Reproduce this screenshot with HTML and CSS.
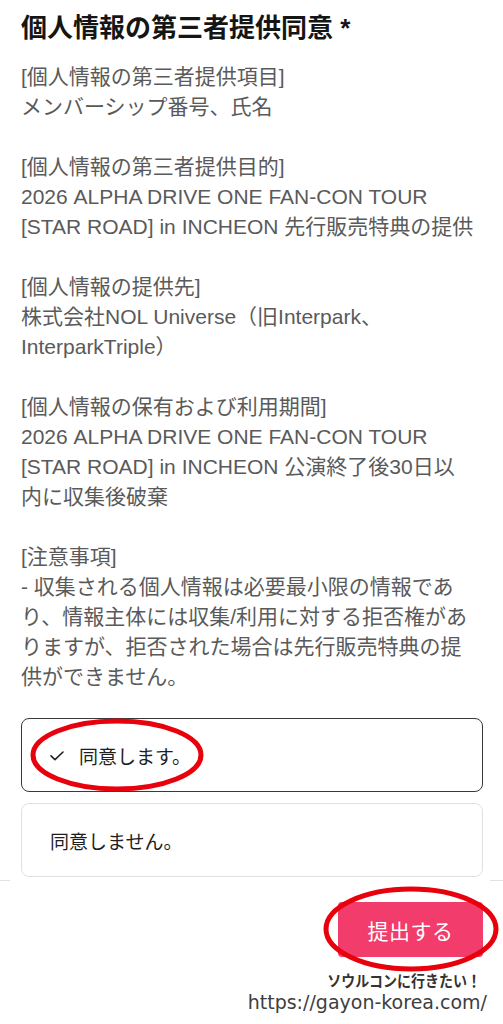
FILE: index.html
```html
<!DOCTYPE html>
<html lang="ja">
<head>
<meta charset="utf-8">
<link rel="stylesheet" href="styles.css">
</head>
<body>
<div class="page">
  <h1 class="title">個人情報の第三者提供同意 *</h1>
  <div class="terms">
    <p>[個人情報の第三者提供項目]<br>メンバーシップ番号、氏名</p>
    <p>[個人情報の第三者提供目的]<br>2026 ALPHA DRIVE ONE FAN-CON TOUR<br>[STAR ROAD] in INCHEON 先行販売特典の提供</p>
    <p>[個人情報の提供先]<br>株式会社NOL Universe（旧Interpark、<br>InterparkTriple）</p>
    <p>[個人情報の保有および利用期間]<br>2026 ALPHA DRIVE ONE FAN-CON TOUR<br>[STAR ROAD] in INCHEON 公演終了後30日以<br>内に収集後破棄</p>
    <p>[注意事項]<br>- 収集される個人情報は必要最小限の情報であ<br>り、情報主体には収集/利用に対する拒否権があ<br>りますが、拒否された場合は先行販売特典の提<br>供ができません。</p>
  </div>
  <div class="options">
    <div class="option selected">
      <svg class="check" width="14" height="10" viewBox="0 0 14 10"><path d="M1 4.8 L5 8.6 L13 1" fill="none" stroke="#222" stroke-width="1.6" stroke-linecap="round" stroke-linejoin="round"/></svg>
      <span>同意します。</span>
    </div>
    <div class="option">
      <span>同意しません。</span>
    </div>
  </div>
  <div class="rule"><span class="seg seg-left"></span><span class="seg seg-right"></span></div>
  <div class="actions">
    <button class="submit">提出する</button>
  </div>
  <div class="watermark">
    <div class="wm-jp">ソウルコンに行きたい！</div>
    <div class="wm-url">https://gayon-korea.com/</div>
  </div>

  <svg class="mark mark-agree" width="180" height="80" viewBox="0 0 180 80"><ellipse cx="90" cy="40" rx="84" ry="34" fill="none" stroke="#e8000c" stroke-width="5"/></svg>
  <svg class="mark mark-submit" width="184" height="92" viewBox="0 0 184 92"><ellipse cx="92" cy="46" rx="85" ry="40" fill="none" stroke="#e8000c" stroke-width="5"/></svg>
</div>
</body>
</html>
```

FILE: styles.css
```css
* { box-sizing: border-box; }

html, body {
  margin: 0;
  padding: 0;
  background: #ffffff;
}

body {
  font-family: "Liberation Sans", "Noto Sans CJK JP", sans-serif;
  color: #555555;
}

.page {
  position: relative;
  width: 503px;
  height: 1024px;
  overflow: hidden;
  padding: 0 20px 0 21px;
}

.title {
  margin: 13px 0 0;
  font-size: 26px;
  line-height: 30px;
  font-weight: 600;
  color: #151515;
  white-space: nowrap;
}

.terms {
  margin-top: 19px;
  font-size: 21px;
  line-height: 30px;
  color: #5a5a5a;
}

.terms p {
  margin: 0 0 30px;
  white-space: nowrap;
}

.terms p:last-child {
  margin-bottom: 0;
}

.options {
  margin-top: 26px;
  display: flex;
  flex-direction: column;
  gap: 11px;
}

.option {
  height: 74px;
  display: flex;
  align-items: center;
  gap: 15px;
  padding: 0 28px;
  border: 1px solid #e0e0e0;
  border-radius: 8px;
  font-size: 19px;
  color: #1e1e1e;
}

.option.selected {
  border: 1.5px solid #3a3a3a;
}

.check {
  flex: none;
  margin-top: 2px;
}

.rule {
  margin: 3px -20px 0 -21px;
  height: 1px;
  display: flex;
  justify-content: space-between;
}

.seg {
  display: block;
  height: 1px;
  background: #e2e2e2;
}

.seg-left { width: 10px; }
.seg-right { width: 13px; }

.actions {
  margin-top: 21px;
  display: flex;
  justify-content: flex-end;
}

.submit {
  width: 145px;
  height: 55px;
  border: none;
  border-radius: 4px;
  background: #f23c6c;
  color: #ffffff;
  font-family: "Noto Sans CJK JP", sans-serif;
  font-size: 21px;
  letter-spacing: 0.5px;
}

.watermark {
  margin-top: 12px;
  display: flex;
  flex-direction: column;
  align-items: flex-end;
}

.wm-jp {
  font-family: "Noto Sans CJK JP", sans-serif;
  font-size: 14px;
  line-height: 22px;
  font-weight: 700;
  color: #333333;
  margin-right: 2px;
  transform: scaleY(1.1);
}

.wm-url {
  font-family: "DejaVu Sans", sans-serif;
  font-size: 19px;
  line-height: 22px;
  color: #3e3e3e;
  margin-right: -4px;
}

.mark {
  position: absolute;
  pointer-events: none;
}

.mark-agree {
  left: 27px;
  top: 715px;
}

.mark-submit {
  left: 319px;
  top: 883px;
}
```
